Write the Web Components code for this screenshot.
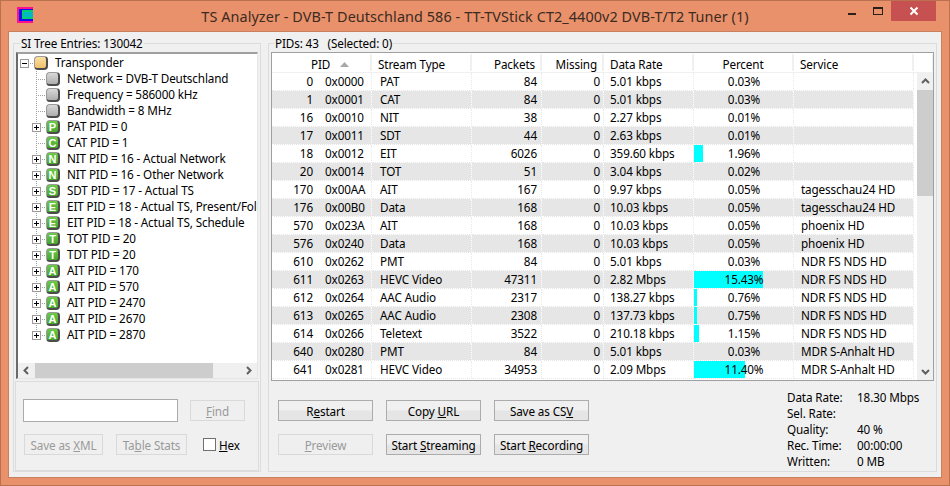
<!DOCTYPE html>
<html lang="en">
<head>
<meta charset="utf-8">
<title>TS Analyzer</title>
<style>
html,body{margin:0;padding:0;width:950px;height:486px;overflow:hidden}
body{font:11.7px/16px "Noto Sans","Open Sans",sans-serif;letter-spacing:-.12px;color:#000}
</style>
</head>
<body>
<ts-app></ts-app>
<script>
function css(s){return '<style>'+s+'</style>';}

class TsLogo extends HTMLElement{
  connectedCallback(){
    this.attachShadow({mode:'open'}).innerHTML=css(':host{display:block;width:16px;height:16px}svg{display:block}')+
    '<svg width="16" height="16" viewBox="0 0 16 16" shape-rendering="crispEdges"><rect width="16" height="16" fill="#ff1090"/><rect x="2" y="2" width="14" height="12" fill="#1010f0"/><rect x="5" y="3" width="11" height="9" fill="#00d070"/><rect x="7" y="5" width="9" height="5" fill="#00b8c8"/></svg>';
  }
}
customElements.define('ts-logo',TsLogo);

class TsTitlebar extends HTMLElement{
  connectedCallback(){
    this.attachShadow({mode:'open'}).innerHTML=css(`
      :host{display:flex;height:30px;box-sizing:border-box;padding-left:9px;align-items:flex-start;color:#3b2a22}
      ts-logo{margin-top:6px;flex:none}
      .t{flex:1;text-align:center;font-size:14.4px;line-height:20px;padding:6px 0 0 78px;white-space:nowrap;letter-spacing:.09px}
      .ctl{display:flex;align-items:flex-start;margin-right:6px;flex:none}
      .b{width:26px;height:20px;display:flex;align-items:center;justify-content:center}
      .close{width:45px;height:20px;background:#c75050;display:flex;align-items:center;justify-content:center}
      svg{display:block}
    `)+`<ts-logo></ts-logo><div class="t"><slot></slot></div>
    <div class="ctl">
      <div class="b"><svg width="10" height="10" shape-rendering="crispEdges"><rect x="1" y="7" width="8" height="2" fill="#2b2019"/></svg></div>
      <div class="b"><svg width="11" height="10" shape-rendering="crispEdges"><rect x=".5" y="1.5" width="9" height="7" fill="none" stroke="#2b2019"/><rect x="0" y="1" width="10" height="2" fill="#2b2019"/></svg></div>
      <div class="close"><svg width="10" height="10"><path d="M1.5 1.5L8.5 8.5M8.5 1.5L1.5 8.5" stroke="#fff" stroke-width="2"/></svg></div>
    </div>`;
  }
}
customElements.define('ts-titlebar',TsTitlebar);

class TsGroup extends HTMLElement{
  connectedCallback(){
    const m=this.getAttribute('legend-offset')||'6';
    this.attachShadow({mode:'open'}).innerHTML=css(`
      :host{display:block;box-sizing:border-box;height:100%}
      fieldset{box-sizing:border-box;height:100%;margin:0;padding:1px 1px 0 1px;border:1px solid #dcdcdc;min-width:0}
      legend{padding:0 1px;margin-left:${m}px;line-height:16px;height:16px;white-space:nowrap;font-size:inherit}
    `)+`<fieldset><legend><slot name="label"></slot></legend><slot></slot></fieldset>`;
  }
}
customElements.define('ts-group',TsGroup);

class TsScrollbar extends HTMLElement{
  connectedCallback(){
    const h=this.getAttribute('dir')==='h';
    this.attachShadow({mode:'open'}).innerHTML=css(`
      :host{display:flex;background:#f0f0f0;flex:none;${h?'height:15px;flex-direction:row':'width:16px;flex-direction:column'}}
      .a{flex:none;display:flex;align-items:center;justify-content:center;${h?'width:17px':'height:17px'}}
      .tr{flex:1;display:flex;${h?'':'flex-direction:column'};min-width:0;min-height:0}
      .th{background:#cdcdcd;flex:none;${h?'height:100%':'width:100%'}}
      svg{display:block}
    `)+`<div class="a"><svg width="9" height="9"><path d="${h?'M6 1L2.5 4.5L6 8':'M1 6L4.5 2.5L8 6'}" fill="none" stroke="#606060" stroke-width="2"/></svg></div>
    <div class="tr"><div class="th" style="${h?'width':'height'}:${this.getAttribute('thumb')}px"></div></div>
    <div class="a"><svg width="9" height="9"><path d="${h?'M3 1L6.5 4.5L3 8':'M1 3L4.5 6.5L8 3'}" fill="none" stroke="#606060" stroke-width="2"/></svg></div>`;
  }
}
customElements.define('ts-scrollbar',TsScrollbar);

const ICON={g:['#6ccb4a','#47a52c'],y:['#fce0a0','#efc06a'],s:['#d8d8d8','#aeaeae']};
class TsNodeIcon extends HTMLElement{
  connectedCallback(){
    const k=ICON[this.getAttribute('kind')||'g'];
    this.attachShadow({mode:'open'}).innerHTML=css(`
      :host{display:flex;box-sizing:border-box;width:14px;height:14px;flex:none;align-items:center;justify-content:center;
      border:1px solid #9a9a9a;border-right:2px solid #4c4c4c;border-bottom:2px solid #4c4c4c;border-radius:4px;
      background:linear-gradient(${k[0]},${k[1]});color:#fff;font:bold 11px/12px "Liberation Sans",sans-serif;letter-spacing:0}
    `)+`<slot></slot>`;
  }
}
customElements.define('ts-node-icon',TsNodeIcon);

class TsTreeNode extends HTMLElement{
  connectedCallback(){
    const exp=this.getAttribute('exp');
    const root=this.hasAttribute('root');
    const kind=this.getAttribute('kind')||'g';
    const letter=this.getAttribute('letter')||'';
    const box=exp?`<span class="box"><svg width="9" height="9" shape-rendering="crispEdges"><rect x=".5" y=".5" width="8" height="8" fill="#fff" stroke="#9a9a9a"/><rect x="2" y="4" width="5" height="1" fill="#000"/>${exp==='+'?'<rect x="4" y="2" width="1" height="5" fill="#000"/>':''}</svg></span>`:'';
    this.attachShadow({mode:'open'}).innerHTML=css(`
      :host{display:flex;height:16px;align-items:center;white-space:nowrap;box-sizing:border-box;padding-left:${root?2:14}px;
      ${root?'':'background:repeating-linear-gradient(#a0a0a0 0 1px,transparent 1px 2px) 18px 0/1px 100% no-repeat;'}}
      :host([last]){background-size:1px 8px}
      .conn{width:14px;height:16px;flex:none;position:relative;display:flex;align-items:center;
        background:repeating-linear-gradient(90deg,#a0a0a0 0 1px,transparent 1px 2px) 4px 8px/10px 1px no-repeat}
      .box{display:block;height:9px}
      svg{display:block}
      ts-node-icon{margin-right:7px}
      .lb{padding-bottom:2px;line-height:14px}
    `)+`<span class="conn">${box}</span><ts-node-icon kind="${kind}">${letter}</ts-node-icon><span class="lb"><slot></slot></span>`;
  }
}
customElements.define('ts-tree-node',TsTreeNode);

const TREE=[
 ['-','y','','Transponder',1],
 ['','s','','Network = DVB-T Deutschland'],
 ['','s','','Frequency = 586000 kHz'],
 ['','s','','Bandwidth = 8 MHz'],
 ['+','g','P','PAT PID = 0'],
 ['','g','C','CAT PID = 1'],
 ['+','g','N','NIT PID = 16 - Actual Network'],
 ['+','g','N','NIT PID = 16 - Other Network'],
 ['+','g','S','SDT PID = 17 - Actual TS'],
 ['+','g','E','EIT PID = 18 - Actual TS, Present/Fol'],
 ['+','g','E','EIT PID = 18 - Actual TS, Schedule'],
 ['+','g','T','TOT PID = 20'],
 ['+','g','T','TDT PID = 20'],
 ['+','g','A','AIT PID = 170'],
 ['+','g','A','AIT PID = 570'],
 ['+','g','A','AIT PID = 2470'],
 ['+','g','A','AIT PID = 2670'],
 ['+','g','A','AIT PID = 2870']
];
class TsTree extends HTMLElement{
  connectedCallback(){
    const nodes=TREE.map((n,i)=>`<ts-tree-node exp="${n[0]}" kind="${n[1]}" letter="${n[2]}" ${n[4]?'root':''} ${i===TREE.length-1?'last':''}>${n[3]}</ts-tree-node>`).join('');
    this.attachShadow({mode:'open'}).innerHTML=css(`
      :host{display:flex;flex-direction:column;box-sizing:border-box;height:327px;margin:0 1px;background:#fff;
      border:1px solid #e6e6e6;border-top:2px solid #a0a0a0;border-left:2px solid #6a6a6a;overflow:hidden}
      .n{flex:1;min-height:0;overflow:hidden;padding-top:1px}
    `)+`<div class="n">${nodes}</div><ts-scrollbar dir="h" thumb="178"></ts-scrollbar>`;
  }
}
customElements.define('ts-tree',TsTree);

class TsButton extends HTMLElement{
  connectedCallback(){
    this.attachShadow({mode:'open'}).innerHTML=css(`
      :host{display:flex;box-sizing:border-box;height:21px;align-items:center;justify-content:center;white-space:nowrap;flex:none;
      border:1px solid #acacac;background:linear-gradient(#f0f0f0 0 45%,#e5e5e5 55%);color:#000}
      :host([disabled]){border-color:#d9d9d9;background:#efefef;color:#9a9a9a}
    `)+`<slot></slot>`;
  }
}
customElements.define('ts-button',TsButton);

class TsSearchPanel extends HTMLElement{
  connectedCallback(){
    this.attachShadow({mode:'open'}).innerHTML=css(`
      :host{display:block;box-sizing:border-box;height:90px;margin:2px 0 0;border:1px solid #dcdcdc;padding:17px 0 0 7px}
      .r{display:flex;align-items:center}
      .r1{height:23px}
      .r2{margin:12px 0 0 1px;height:21px}
      .inp{box-sizing:border-box;width:155px;height:23px;background:#fff;border:1px solid #ababab}
      .find{width:55px;margin-left:12px}
      .xml{width:79px}
      .st{width:71px;margin-left:13px}
      .chk{box-sizing:border-box;width:13px;height:13px;background:#fff;border:1px solid #707070;margin:0 3px 0 16px;flex:none}
    `)+`<div class="r r1"><div class="inp"></div><ts-button class="find" disabled><u>F</u>ind</ts-button></div>
    <div class="r r2"><ts-button class="xml" disabled>Save as&nbsp;<u>X</u>ML</ts-button><ts-button class="st" disabled>Ta<u>b</u>le Stats</ts-button><div class="chk"></div><label><u>H</u>ex</label></div>`;
  }
}
customElements.define('ts-search-panel',TsSearchPanel);

const COLS=[100,100,70,62,90,100,120];
const ROWS=[
[0,'0x0000','PAT',84,0,'5.01 kbps','0.03%',0,''],
[1,'0x0001','CAT',84,0,'5.01 kbps','0.03%',0,''],
[16,'0x0010','NIT',38,0,'2.27 kbps','0.01%',0,''],
[17,'0x0011','SDT',44,0,'2.63 kbps','0.01%',0,''],
[18,'0x0012','EIT',6026,0,'359.60 kbps','1.96%',9,''],
[20,'0x0014','TOT',51,0,'3.04 kbps','0.02%',0,''],
[170,'0x00AA','AIT',167,0,'9.97 kbps','0.05%',0,'tagesschau24 HD'],
[176,'0x00B0','Data',168,0,'10.03 kbps','0.05%',0,'tagesschau24 HD'],
[570,'0x023A','AIT',168,0,'10.03 kbps','0.05%',0,'phoenix HD'],
[576,'0x0240','Data',168,0,'10.03 kbps','0.05%',0,'phoenix HD'],
[610,'0x0262','PMT',84,0,'5.01 kbps','0.03%',0,'NDR FS NDS HD'],
[611,'0x0263','HEVC Video',47311,0,'2.82 Mbps','15.43%',69,'NDR FS NDS HD'],
[612,'0x0264','AAC Audio',2317,0,'138.27 kbps','0.76%',3,'NDR FS NDS HD'],
[613,'0x0265','AAC Audio',2308,0,'137.73 kbps','0.75%',3,'NDR FS NDS HD'],
[614,'0x0266','Teletext',3522,0,'210.18 kbps','1.15%',5,'NDR FS NDS HD'],
[640,'0x0280','PMT',84,0,'5.01 kbps','0.03%',0,'MDR S-Anhalt HD'],
[641,'0x0281','HEVC Video',34953,0,'2.09 Mbps','11.40%',51,'MDR S-Anhalt HD']
];
class TsPidList extends HTMLElement{
  connectedCallback(){
    const grid=COLS.map(c=>c+'px').join(' ');
    const rows=ROWS.map((r,i)=>`<div class="row ${i%2?'alt':''}">
      <div class="c pid"><span class="num">${r[0]}</span><span class="hex">${r[1]}</span></div>
      <div class="c st">${r[2]}</div><div class="c pk">${r[3]}</div><div class="c ms">${r[4]}</div>
      <div class="c dr">${r[5]}</div>
      <div class="c pc">${r[7]?`<i style="width:${r[7]}px"></i>`:''}<span>${r[6]}</span></div>
      <div class="c sv">${r[8]}</div></div>`).join('');
    this.attachShadow({mode:'open'}).innerHTML=css(`
      :host{display:block;box-sizing:border-box;height:329px;margin:0 1px;background:#fff;border:1px solid #a0a0a0;overflow:hidden;padding:1px 0 0 0}
      .head,.row{display:grid;grid-template-columns:${grid};width:642px}
      .head{height:18px;width:662px;grid-template-columns:${grid} 20px;border-bottom:1px solid #f0f0f0;box-sizing:content-box}
      .head>div{border-right:2px solid #f0f0f0;display:flex;align-items:center;line-height:16px;box-sizing:border-box;height:17px;padding-top:3px}
      .body{display:flex}
      .rows{width:645px;flex:none}
      .row{height:18px}
      .c{box-sizing:border-box;border-right:1px dotted #e8e8e8;border-bottom:1px dotted #e8e8e8;line-height:17px;height:18px;white-space:nowrap;overflow:visible;position:relative}
      .alt .c{background:#e6e6e6;border-color:#fff}
      .pid{display:flex}
      .num{width:41px;text-align:right;flex:none}.hex{margin-left:12px}
      .st{padding-left:8px}
      .pk,.ms{text-align:right;padding-right:4px}.ms{padding-right:3px}
      .dr{padding-left:6px}
      .pc{text-align:center;padding-left:1px}
      .pc i{position:absolute;left:0;top:0;height:17px;background:#00ffff}
      .pc span{position:relative}
      .sv{padding-left:7px}
      .h1{justify-content:flex-start;padding-left:39px}
      .h1 svg{margin-left:10px}
      .h2{padding-left:6px}
      .h3,.h4{justify-content:flex-end;padding-right:5px}
      .h5{padding-left:6px}
      .h6{justify-content:center}
      .h7{padding-left:6px}
      ts-scrollbar{height:307px}
    `)+`<div class="head"><div class="h1">PID<svg width="9" height="5"><path d="M0 5L4.5 0L9 5Z" fill="#a8a8a8"/></svg></div><div class="h2">Stream Type</div><div class="h3">Packets</div><div class="h4">Missing</div><div class="h5">Data Rate</div><div class="h6">Percent</div><div class="h7">Service</div><div></div></div>
    <div class="body"><div class="rows">${rows}</div><ts-scrollbar dir="v" thumb="106"></ts-scrollbar></div>`;
  }
}
customElements.define('ts-pid-list',TsPidList);

class TsStats extends HTMLElement{
  connectedCallback(){
    const d=[['Data Rate:','18.30 Mbps'],['Sel. Rate:',''],['Quality:','40 %'],['Rec. Time:','00:00:00'],['Written:','0 MB']];
    this.attachShadow({mode:'open'}).innerHTML=css(`
      :host{display:grid;grid-template-columns:70px auto;grid-auto-rows:16px;line-height:16px;white-space:nowrap;align-content:start}
    `)+d.map(r=>`<div>${r[0]}</div><div>${r[1]}</div>`).join('');
  }
}
customElements.define('ts-stats',TsStats);

class TsControls extends HTMLElement{
  connectedCallback(){
    this.attachShadow({mode:'open'}).innerHTML=css(`
      :host{display:flex;box-sizing:border-box;flex:1;padding-left:8px}
      .btns{display:grid;grid-template-columns:95px 95px 95px;grid-auto-rows:21px;column-gap:13px;row-gap:13px;padding-top:19px}
      ts-stats{margin-left:198px;padding-top:8px}
    `)+`<div class="btns">
      <ts-button>R<u>e</u>start</ts-button><ts-button>Copy&nbsp;<u>U</u>RL</ts-button><ts-button>Save as CS<u>V</u></ts-button>
      <ts-button disabled><u>P</u>review</ts-button><ts-button>Start&nbsp;<u>S</u>treaming</ts-button><ts-button>Start&nbsp;<u>R</u>ecording</ts-button>
    </div><ts-stats></ts-stats>`;
  }
}
customElements.define('ts-controls',TsControls);

class TsApp extends HTMLElement{
  connectedCallback(){
    this.attachShadow({mode:'open'}).innerHTML=css(`
      :host{display:flex;flex-direction:column;box-sizing:border-box;width:950px;height:486px;background:#e9916a;border:1px solid #b9714f;padding:0 7px 7px}
      .client{flex:1;min-height:0;background:#f0f0f0;border:1px solid #c9805e;display:grid;grid-template-columns:248px 669px;column-gap:7px;padding:3px 0 6px 4px;align-content:stretch}
    `)+`<ts-titlebar>TS Analyzer - DVB-T Deutschland 586 - TT-TVStick CT2_4400v2 DVB-T/T2 Tuner (1)</ts-titlebar>
    <div class="client">
      <ts-group legend-offset="5"><span slot="label">SI Tree Entries: 130042</span><ts-tree></ts-tree><ts-search-panel></ts-search-panel></ts-group>
      <ts-group legend-offset="4"><span slot="label">PIDs: 43&nbsp;&nbsp;&nbsp;(Selected: 0)</span><ts-pid-list></ts-pid-list><ts-controls style="display:flex;height:89px"></ts-controls></ts-group>
    </div>`;
  }
}
customElements.define('ts-app',TsApp);
</script>
</body>
</html>
